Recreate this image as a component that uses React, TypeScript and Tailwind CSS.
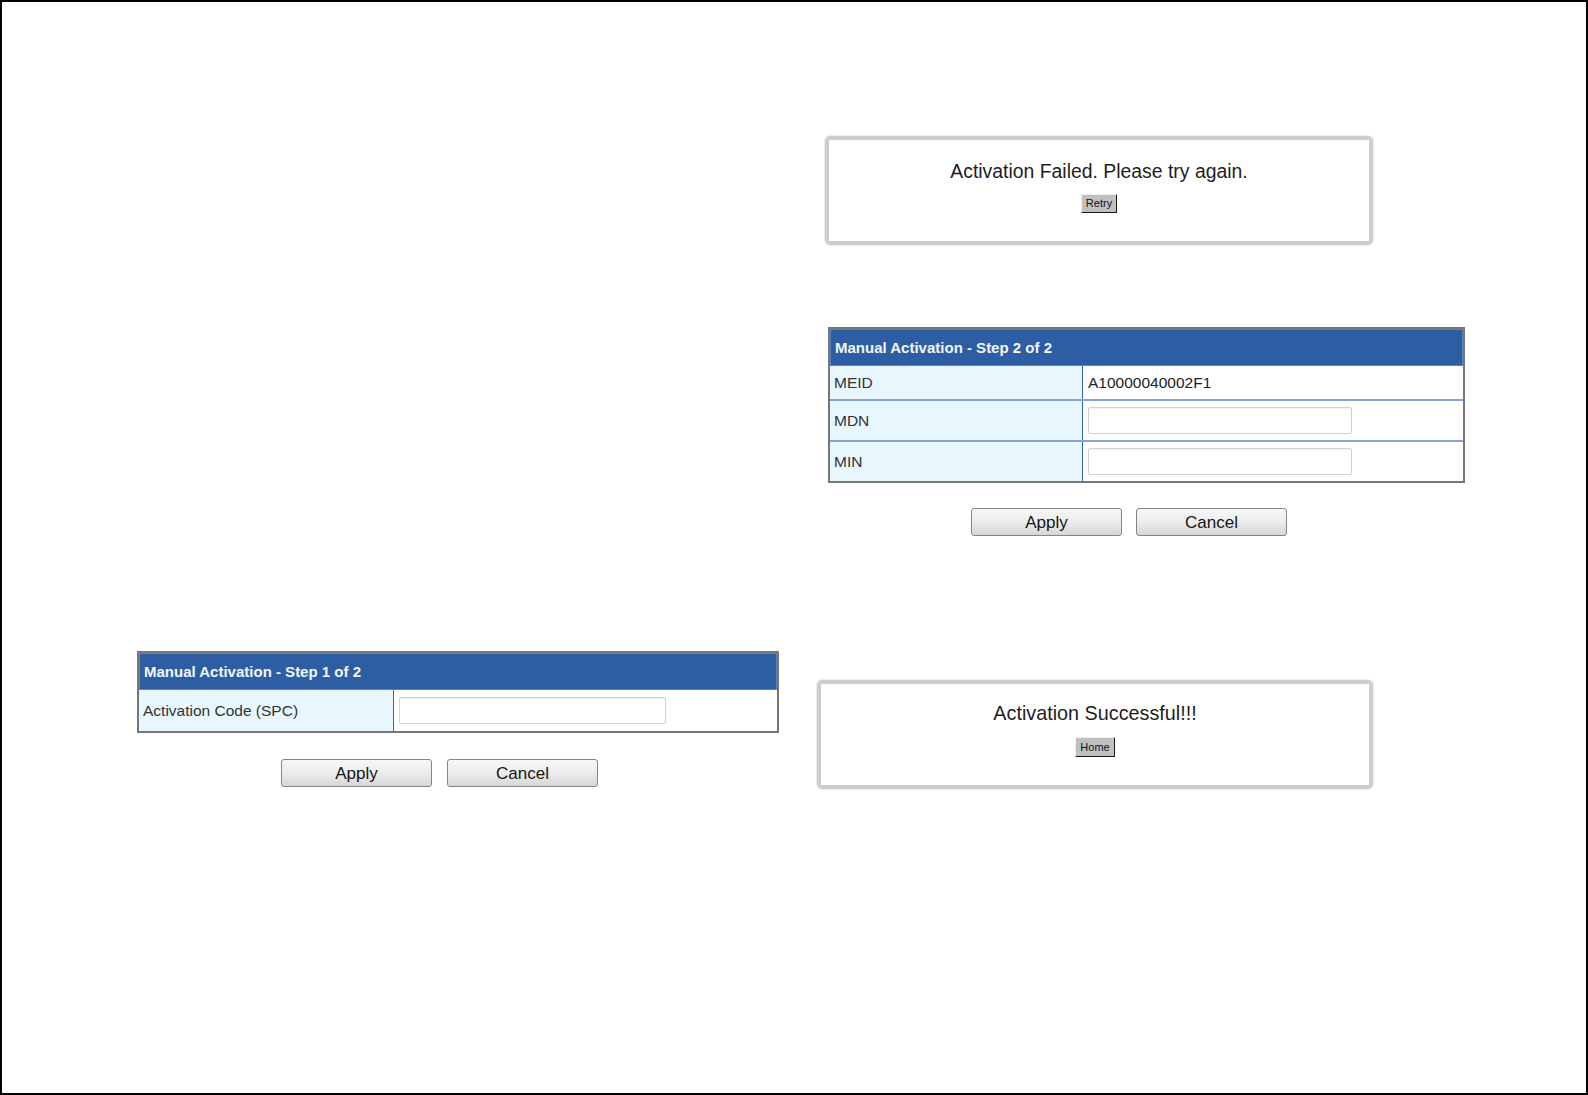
import React from "react";

const font = { fontFamily: '"Liberation Sans", Arial, sans-serif' };

function BigButton({ label }: { label: string }) {
  return (
    <button className="w-[151px] h-[28px] border border-[#858585] rounded-[3px] bg-gradient-to-b from-[#f7f7f7] via-[#ececec] to-[#d6d6d6] text-[17px] leading-none text-[#151515] flex items-center justify-center">
      {label}
    </button>
  );
}

function SmallButton({ label, w }: { label: string; w: string }) {
  return (
    <button
      className={`${w} h-[19px] bg-[#c0c0c0] border border-t-[#f0f0f0] border-l-[#f0f0f0] border-r-[#1a1a1a] border-b-[#1a1a1a] text-[11px] leading-none text-[#111] flex items-center justify-center`}
    >
      {label}
    </button>
  );
}

function TextInput({ w }: { w: string }) {
  return (
    <div
      className={`${w} h-[27px] bg-white border border-[#d2d2d2] rounded-[2px] shadow-[inset_0_1px_1px_rgba(0,0,0,0.06)]`}
    />
  );
}

function Header({ title }: { title: string }) {
  return (
    <div className="h-[37px] bg-[#2d5ea4] border border-[#5a82bd] flex items-center pl-[4px]">
      <span className="text-[15px] font-bold text-[#f2f5fa] leading-none">{title}</span>
    </div>
  );
}

function Row({
  label,
  children,
  h,
  top,
  labelW,
}: {
  label: string;
  children: React.ReactNode;
  h: string;
  top?: boolean;
  labelW: string;
}) {
  return (
    <div className={`flex ${h} ${top ? "border-t-2 border-[#86a3d3]" : ""}`}>
      <div className={`${labelW} shrink-0 bg-[#e8f6fd] border-r border-[#3a64ad] flex items-center pl-[4px] text-[15.5px] text-[#333]`}>
        {label}
      </div>
      <div className="flex-1 bg-white flex items-center pl-[5px] text-[15.5px] text-[#222]">{children}</div>
    </div>
  );
}

export default function App() {
  return (
    <div
      className="w-[1588px] h-[1095px] border-2 border-black bg-white flex box-border overflow-hidden"
      style={font}
    >
      {/* Left column: step 1 */}
      <div className="ml-[135px] mt-[649px] w-[642px] shrink-0">
        <div className="border-2 border-[#767676]">
          <Header title="Manual Activation - Step 1 of 2" />
          <Row label="Activation Code (SPC)" h="h-[41px]" labelW="w-[255px]">
            <TextInput w="w-[267px]" />
          </Row>
        </div>
        <div className="flex gap-[15px] ml-[144px] mt-[26px]">
          <BigButton label="Apply" />
          <BigButton label="Cancel" />
        </div>
      </div>

      {/* Right column */}
      <div className="ml-[38px] mt-[134px] shrink-0 flex flex-col">
        <div className="ml-[8px] w-[548px] h-[109px] box-border border-4 border-[#cecece] rounded-[5px] shadow-[0_0_0_1px_#efefef] flex flex-col items-center pt-[20px]">
          <div className="text-[19.4px] leading-[22px] text-[#1e1e1e]">Activation Failed. Please try again.</div>
          <div className="mt-[12px]">
            <SmallButton label="Retry" w="w-[36px]" />
          </div>
        </div>

        <div className="ml-[11px] mt-[82px] w-[637px] border-2 border-[#767676]">
          <Header title="Manual Activation - Step 2 of 2" />
          <Row label="MEID" h="h-[33px]" labelW="w-[253px]">
            A10000040002F1
          </Row>
          <Row label="MDN" h="h-[41px]" top labelW="w-[253px]">
            <TextInput w="w-[264px]" />
          </Row>
          <Row label="MIN" h="h-[41px]" top labelW="w-[253px]">
            <TextInput w="w-[264px]" />
          </Row>
        </div>
        <div className="flex gap-[14px] ml-[154px] mt-[25px]">
          <BigButton label="Apply" />
          <BigButton label="Cancel" />
        </div>

        <div className="mt-[144px] w-[556px] h-[109px] box-border border-4 border-[#cecece] rounded-[5px] shadow-[0_0_0_1px_#efefef] flex flex-col items-center pt-[18px]">
          <div className="text-[19.8px] leading-[22px] text-[#1e1e1e]">Activation Successful!!!</div>
          <div className="mt-[13px]">
            <SmallButton label="Home" w="w-[40px] h-[20px]" />
          </div>
        </div>
      </div>
    </div>
  );
}
